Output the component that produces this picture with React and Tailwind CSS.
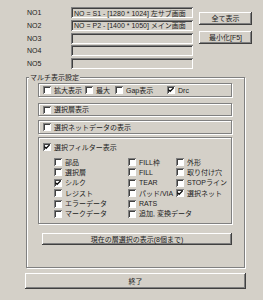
import React from "react";

// ================= Data =================
const slots = [
  { key: "NO1", value: "NO = S1 - [1280 * 1024] 左サブ画面" },
  { key: "NO2", value: "NO = P2 - [1400 * 1050] メイン画面" },
  { key: "NO3", value: "" },
  { key: "NO4", value: "" },
  { key: "NO5", value: "" },
];

const filterCols = [
  {
    width: "w-[74px]",
    items: [
      { label: "部品" },
      { label: "選択層" },
      { label: "シルク", checked: true },
      { label: "レジスト" },
      { label: "エラーデータ" },
      { label: "マークデータ" },
    ],
  },
  {
    width: "w-[48px]",
    items: [
      { label: "FILL枠" },
      { label: "FILL" },
      { label: "TEAR" },
      { label: "パッド/VIA" },
      { label: "RATS" },
      { label: "追加, 変換データ" },
    ],
  },
  {
    width: "w-[52px]",
    items: [
      { label: "外形" },
      { label: "取り付け穴" },
      { label: "STOPライン" },
      { label: "選択ネット", checked: true },
    ],
  },
];

// ================= Win98 parts =================
const raised =
  "shadow-[inset_-1px_-1px_0_#404040,inset_1px_1px_0_#ffffff,inset_-2px_-2px_0_#808080]";
const sunken =
  "shadow-[inset_1px_1px_0_#808080,inset_-1px_-1px_0_#ffffff,inset_2px_2px_0_#404040]";
const etched = "border border-[#808080] shadow-[1px_1px_0_#ffffff,inset_1px_1px_0_#ffffff]";

const Check = ({ label, checked, className = "" }) => (
  <div className={`flex items-center h-[10px] whitespace-nowrap ${className}`}>
    <div className={`w-[8px] h-[8px] bg-white shrink-0 flex items-center justify-center ${sunken}`}>
      {checked && (
        <svg width="6" height="6" viewBox="0 0 7 7">
          <path d="M0.5 3 L2.5 5 L6.5 1" stroke="#000" strokeWidth="1.4" fill="none" />
        </svg>
      )}
    </div>
    <span className="ml-[3px]">{label}</span>
  </div>
);

const Button = ({ children, className = "" }) => (
  <div className={`bg-[#d4d0c8] flex items-center justify-center ${raised} ${className}`}>
    {children}
  </div>
);

export default function App() {
  return (
    <div className="w-[263px] h-[300px] bg-[#d4d0c8] text-[#1c1c1c] text-[7px] leading-none font-['Liberation_Sans','Noto_Sans_CJK_JP',sans-serif] overflow-hidden">
      {/* NO1..NO5 */}
      <div className="flex pl-[27px] pt-[7px]">
        <div className="flex flex-col gap-[1.75px]">
          {slots.map((s) => (
            <div key={s.key} className="flex items-center h-[11px]">
              <span className="w-[44px]">{s.key}</span>
              <div className={`w-[122px] h-[11px] flex items-center pl-[3px] pt-[1px] whitespace-nowrap overflow-hidden ${sunken}`}>
                {s.value}
              </div>
            </div>
          ))}
        </div>
        <div className="flex flex-col gap-[6px] ml-[6px] pt-[5px]">
          <Button className="w-[53px] h-[13px]">全て表示</Button>
          <Button className="w-[53px] h-[13px]">最小化[F5]</Button>
        </div>
      </div>

      {/* マルチ表示設定 */}
      <div className={`relative ml-[26px] mt-[8px] w-[219px] h-[191px] pl-[11px] pt-[5px] ${etched}`}>
        <span className="absolute -top-[4px] left-[2px] bg-[#d4d0c8] px-[1px]">マルチ表示設定</span>

        <div className={`w-[194px] h-[14px] flex items-center pl-[4px] ${etched}`}>
          <Check label="拡大表示" className="w-[42px]" />
          <Check label="最大" className="w-[30px]" />
          <Check label="Gap表示" className="w-[52px]" />
          <Check label="Drc" checked />
        </div>

        <div className={`mt-[6px] w-[194px] h-[13px] flex items-center pl-[4px] ${etched}`}>
          <Check label="選択層表示" />
        </div>

        <div className={`mt-[4px] w-[194px] h-[14px] flex items-center pl-[4px] ${etched}`}>
          <Check label="選択ネットデータの表示" />
        </div>

        <div className={`mt-[3px] w-[194px] h-[87px] pl-[4px] pt-[4px] ${etched}`}>
          <Check label="選択フィルター表示" checked />
          <div className="flex mt-[5px] pl-[11px]">
            {filterCols.map((col, i) => (
              <div key={i} className={`flex flex-col gap-[0.4px] shrink-0 ${col.width}`}>
                {col.items.map((item) => (
                  <Check key={item.label} label={item.label} checked={item.checked} />
                ))}
              </div>
            ))}
          </div>
        </div>

        <Button className="mt-[9px] ml-[4px] w-[190px] h-[12px]">現在の層選択の表示(8個まで)</Button>
      </div>

      <Button className="ml-[25px] mt-[5px] w-[221px] h-[16px]">終了</Button>
    </div>
  );
}
